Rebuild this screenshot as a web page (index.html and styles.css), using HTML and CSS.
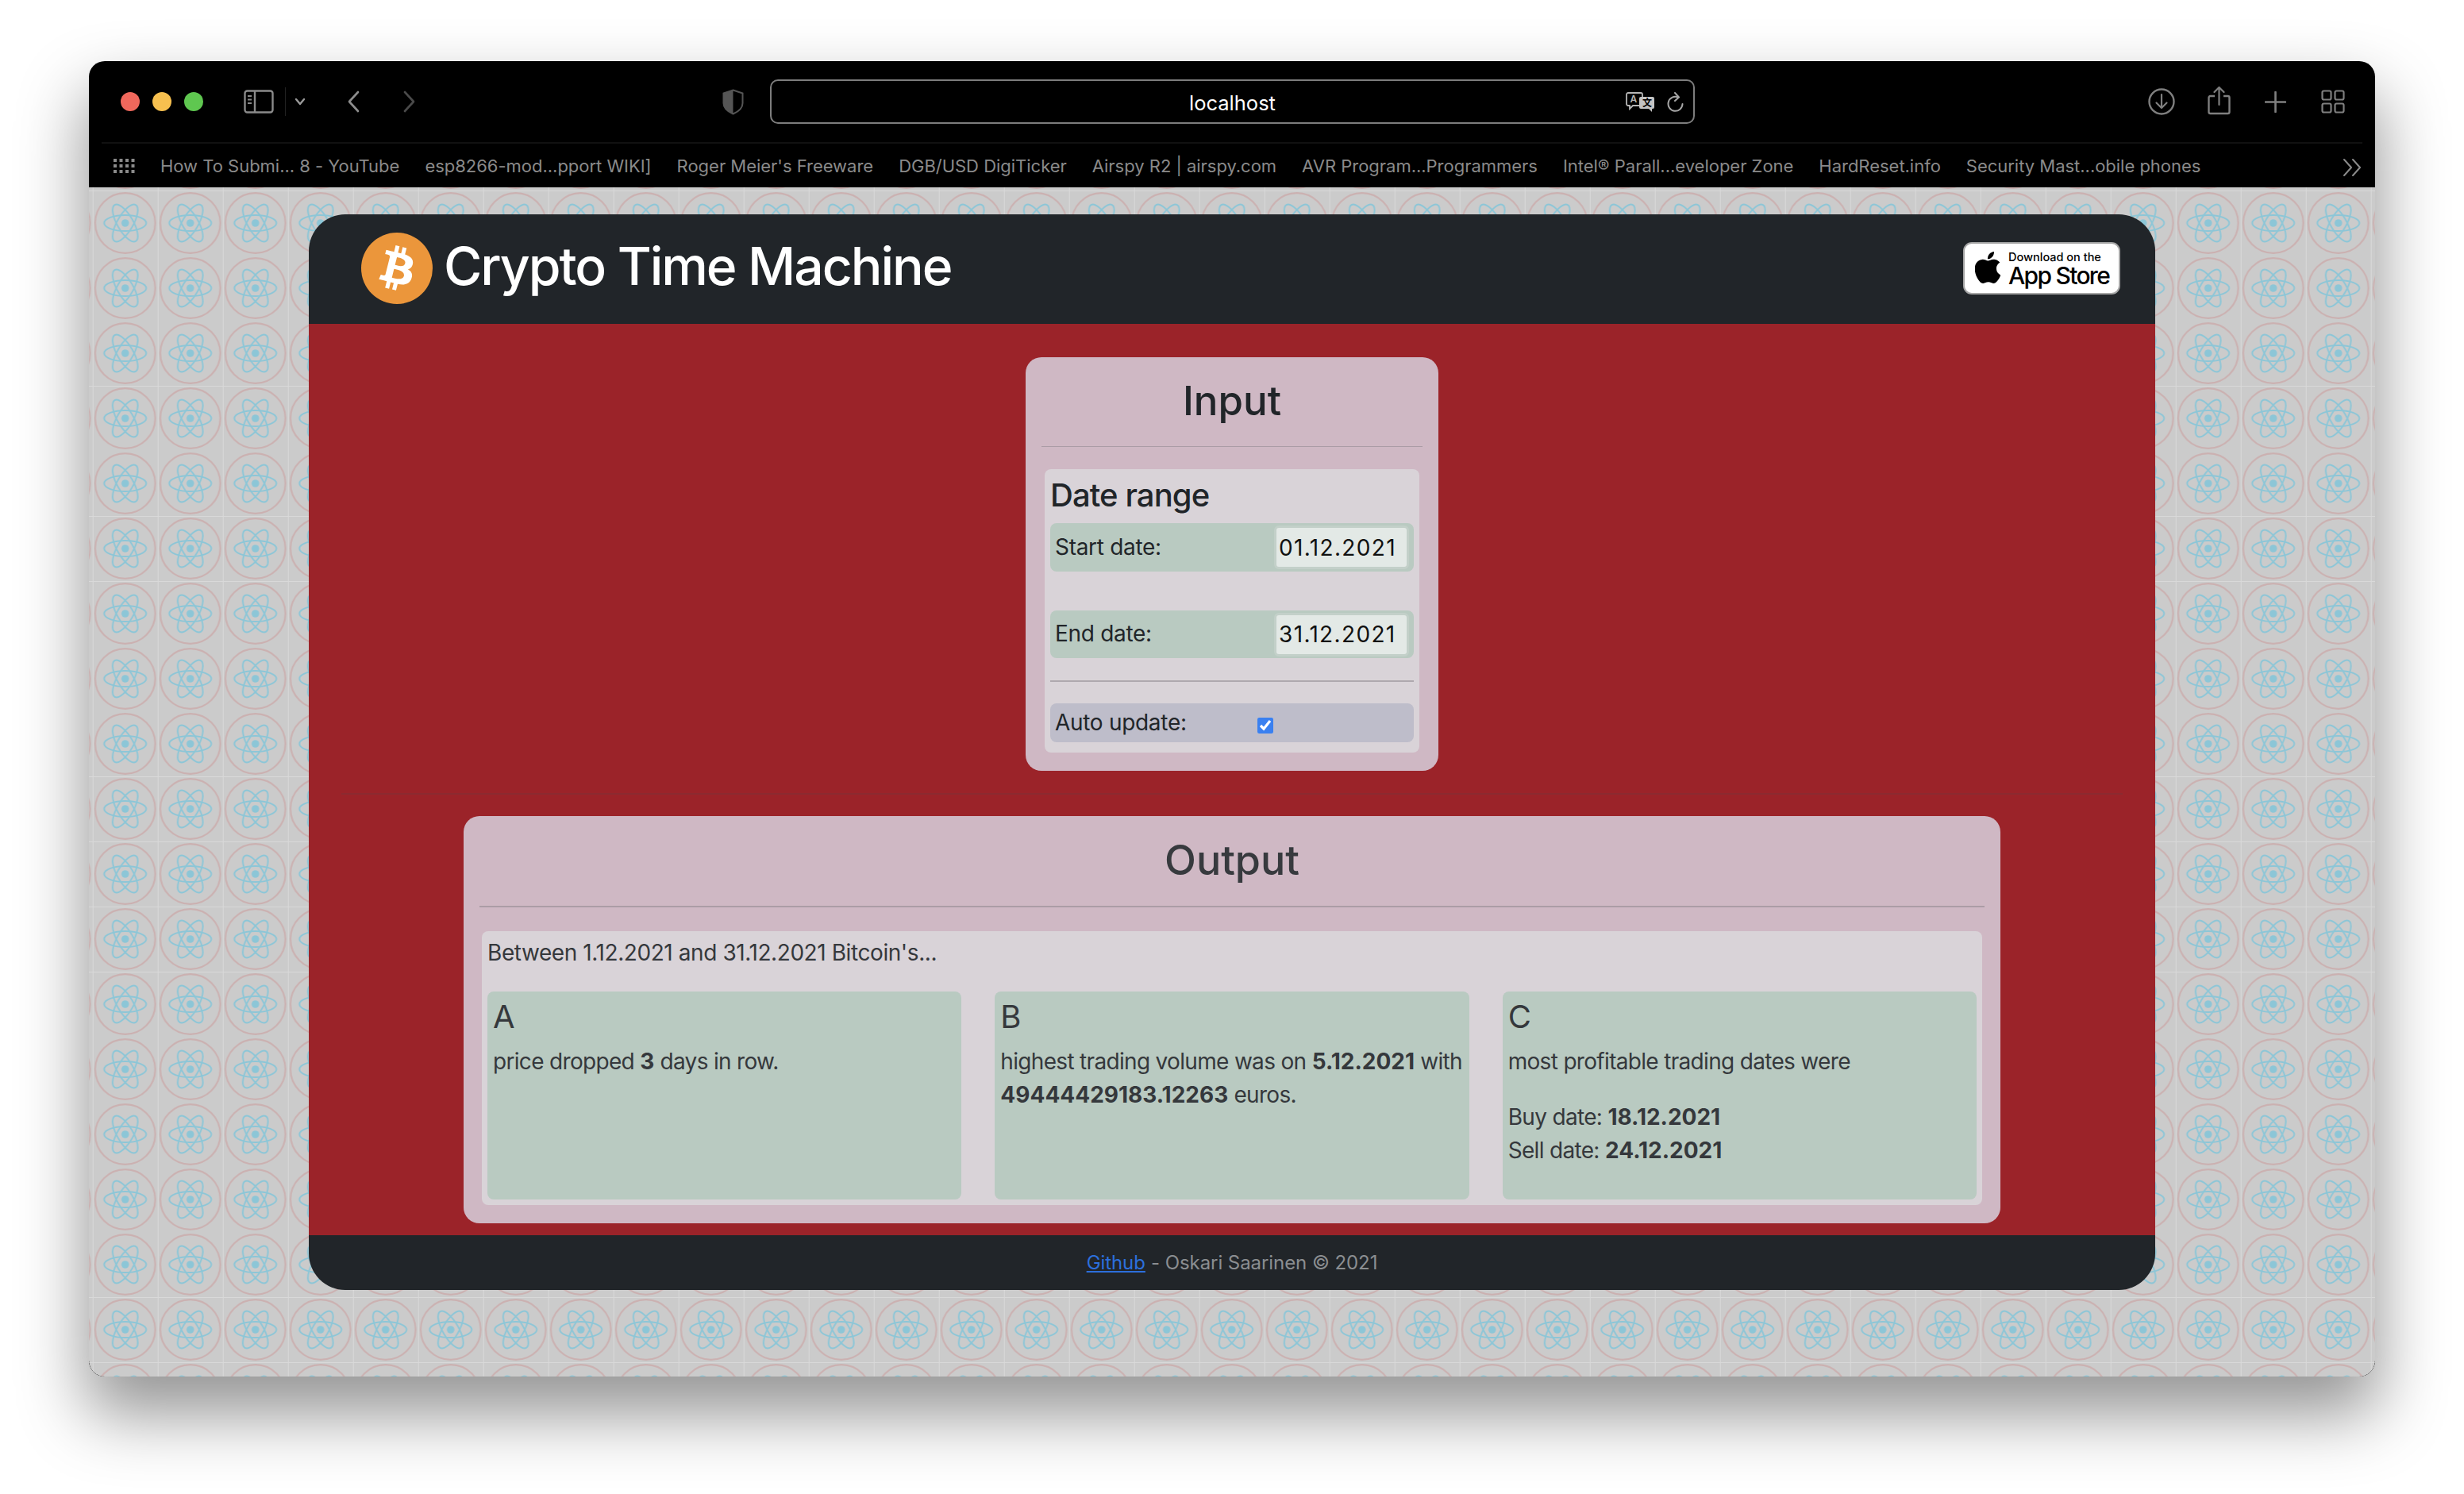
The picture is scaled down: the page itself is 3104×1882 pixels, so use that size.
FILE: index.html
```html
<!DOCTYPE html>
<html lang="en">
<head>
<meta charset="utf-8">
<title>Crypto Time Machine</title>
<link rel="stylesheet" href="styles.css">
</head>
<body>
<div class="window">
  <div class="toolbar">
    <span class="light red"></span><span class="light yellow"></span><span class="light green"></span>
    <svg class="ic sidebar" viewBox="0 0 38 30"><rect x="1.500" y="1.500" width="35" height="27" rx="3" fill="none" stroke="#8a8a8a" stroke-width="2.400"/><path d="M14 2v26" stroke="#8a8a8a" stroke-width="2.400"/><path d="M5 8h5M5 12.500h5M5 17h5" stroke="#8a8a8a" stroke-width="2"/></svg>
    <span class="divider"></span>
    <svg class="ic chev" viewBox="0 0 14 10"><path d="M2 2l5 6 5-6" fill="none" stroke="#9a9a9a" stroke-width="2.400" stroke-linecap="round" stroke-linejoin="round"/></svg>
    <svg class="ic back" viewBox="0 0 16 28"><path d="M14 2L3 14l11 12" fill="none" stroke="#8d8d8d" stroke-width="2.600" stroke-linecap="round" stroke-linejoin="round"/></svg>
    <svg class="ic fwd" viewBox="0 0 16 28"><path d="M2 2l11 12L2 26" fill="none" stroke="#4a4a4a" stroke-width="2.600" stroke-linecap="round" stroke-linejoin="round"/></svg>
    <svg class="ic shield" viewBox="0 0 27 33"><path d="M13.500 1.500L25.500 5.500V18c0 6-5 10.500-12 13.500C6.500 28.500 1.500 24 1.500 18V5.500z" fill="none" stroke="#555" stroke-width="2"/><path d="M13.500 1.500L1.500 5.500V18c0 6 5 10.500 12 13.500z" fill="#555"/></svg>
    <div class="address">
      <span class="host">localhost</span>
      <div class="addr-icons">
        <svg class="ic translate" viewBox="0 0 37 26"><path d="M3 1h16a2 2 0 0 1 2 2v12a2 2 0 0 1-2 2H9l-4 4v-4H3a2 2 0 0 1-2-2V3a2 2 0 0 1 2-2z" fill="none" stroke="#b5b5b5" stroke-width="1.800"/><text x="5.500" y="13" class="tr-a">A</text><path d="M19 6h15a2 2 0 0 1 2 2v11a2 2 0 0 1-2 2h-1v4l-4-4H19a2 2 0 0 1-2-2V8a2 2 0 0 1 2-2z" fill="#c4c4c4"/><text x="21" y="18" class="tr-b">文</text></svg>
        <svg class="ic reload" viewBox="0 0 22 26"><path d="M14 6.500A9 9 0 1 0 19.500 15" fill="none" stroke="#a6a6a6" stroke-width="2" stroke-linecap="round"/><path d="M10 1l5 5.500-5 4.500" fill="none" stroke="#a6a6a6" stroke-width="2" stroke-linecap="round" stroke-linejoin="round"/></svg>
      </div>
    </div>
    <svg class="ic download" viewBox="0 0 34 34"><circle cx="17" cy="17" r="15.500" fill="none" stroke="#7f7f7f" stroke-width="2.400"/><path d="M17 8v17M10.500 18.500L17 25l6.500-6.500" fill="none" stroke="#7f7f7f" stroke-width="2.200" stroke-linecap="round" stroke-linejoin="round"/></svg>
    <svg class="ic share" viewBox="0 0 29 37"><path d="M9 13H3.500a2 2 0 0 0-2 2v18a2 2 0 0 0 2 2h22a2 2 0 0 0 2-2V15a2 2 0 0 0-2-2H20" fill="none" stroke="#7f7f7f" stroke-width="2.400"/><path d="M14.500 24V2M8.500 8l6-6 6 6" fill="none" stroke="#7f7f7f" stroke-width="2.200" stroke-linecap="round" stroke-linejoin="round"/></svg>
    <svg class="ic plus" viewBox="0 0 27 27"><path d="M13.500 1v25M1 13.500h25" stroke="#7f7f7f" stroke-width="2.600" stroke-linecap="round"/></svg>
    <svg class="ic tabs" viewBox="0 0 30 30"><g fill="none" stroke="#7f7f7f" stroke-width="2.200"><rect x="1.500" y="1.500" width="11" height="11" rx="2"/><rect x="17.500" y="1.500" width="11" height="11" rx="2"/><rect x="1.500" y="17.500" width="11" height="11" rx="2"/><rect x="17.500" y="17.500" width="11" height="11" rx="2"/></g></svg>
  </div>
  <div class="bookmarks">
    <svg class="ic apps" viewBox="0 0 27 18"><g fill="#8a8a8a"><rect x="0" y="0" width="4" height="4"/><rect x="7.500" y="0" width="4" height="4"/><rect x="15" y="0" width="4" height="4"/><rect x="22.500" y="0" width="4" height="4"/><rect x="0" y="7" width="4" height="4"/><rect x="7.500" y="7" width="4" height="4"/><rect x="15" y="7" width="4" height="4"/><rect x="22.500" y="7" width="4" height="4"/><rect x="0" y="14" width="4" height="4"/><rect x="7.500" y="14" width="4" height="4"/><rect x="15" y="14" width="4" height="4"/><rect x="22.500" y="14" width="4" height="4"/></g></svg>
    <span class="bm">How To Submi... 8 - YouTube</span>
    <span class="bm">esp8266-mod...pport WIKI]</span>
    <span class="bm">Roger Meier's Freeware</span>
    <span class="bm">DGB/USD DigiTicker</span>
    <span class="bm">Airspy R2 | airspy.com</span>
    <span class="bm">AVR Program...Programmers</span>
    <span class="bm">Intel® Parall...eveloper Zone</span>
    <span class="bm">HardReset.info</span>
    <span class="bm">Security Mast...obile phones</span>
    <svg class="ic more" viewBox="0 0 24 22"><path d="M2 1l9 10-9 10M13 1l9 10-9 10" fill="none" stroke="#8a8a8a" stroke-width="2" stroke-linecap="round" stroke-linejoin="round"/></svg>
  </div>
  <div class="page">
    <svg class="wallpaper" width="100%" height="100%">
      <defs>
        <pattern id="atom" x="4.700" y="4" width="82" height="82" patternUnits="userSpaceOnUse">
          <path d="M0 .5H82M.5 0V82" stroke="#d9d9d9" stroke-width="1" fill="none"/>
          <circle cx="41" cy="41" r="37.800" fill="none" stroke="#cbb1b1" stroke-width="2.200"/>
          <g fill="none" stroke="#8cc6d7" stroke-width="2">
            <ellipse cx="41" cy="41" rx="26.500" ry="10"/>
            <ellipse cx="41" cy="41" rx="26.500" ry="10" transform="rotate(60 41 41)"/>
            <ellipse cx="41" cy="41" rx="26.500" ry="10" transform="rotate(120 41 41)"/>
          </g>
          <circle cx="41" cy="41" r="4.800" fill="#8cc6d7"/>
        </pattern>
      </defs>
      <rect width="100%" height="100%" fill="#cbcbcb"/>
      <rect width="100%" height="100%" fill="url(#atom)"/>
    </svg>
    <div class="app">
      <header class="app-head">
        <div class="brand">
          <svg class="btc" viewBox="0 0 90 90"><circle cx="45" cy="45" r="45" fill="#eb963b"/><g transform="translate(0.500 0.500) scale(1.400)"><path fill="#fff" d="M46.110 27.441c.636-4.258-2.606-6.547-7.039-8.074l1.438-5.768-3.512-.875-1.400 5.616c-.922-.230-1.870-.447-2.812-.662l1.410-5.653-3.509-.875-1.439 5.766c-.764-.174-1.514-.346-2.242-.527l.004-.018-4.842-1.209-.934 3.750s2.605.597 2.550.634c1.422.355 1.680 1.296 1.636 2.042l-1.638 6.571c.098.025.225.061.365.117l-.370-.092-2.297 9.205c-.174.432-.615 1.080-1.609.834.035.051-2.552-.637-2.552-.637l-1.743 4.020 4.570 1.139c.850.213 1.683.436 2.502.646l-1.453 5.835 3.507.875 1.440-5.772c.957.260 1.887.500 2.797.726L27.504 50.800l3.511.875 1.453-5.823c5.987 1.133 10.490.676 12.383-4.738 1.527-4.360-.075-6.875-3.225-8.516 2.294-.531 4.022-2.040 4.483-5.157zM38.087 38.690c-1.086 4.360-8.426 2.004-10.807 1.412l1.928-7.729c2.380.594 10.011 1.770 8.880 6.317zm1.085-11.312c-.990 3.966-7.100 1.951-9.083 1.457l1.748-7.010c1.983.494 8.367 1.416 7.335 5.553z"/></g></svg>
          <h1 class="title">Crypto Time Machine</h1>
        </div>
        <a class="badge">
          <svg class="apple" viewBox="2.500 0 19 24"><path fill="#000" d="M12.152 6.896c-.948 0-2.415-1.078-3.960-1.040-2.040.027-3.910 1.183-4.961 3.014-2.117 3.675-.546 9.103 1.519 12.090 1.013 1.454 2.208 3.090 3.792 3.039 1.520-.065 2.090-.987 3.935-.987 1.831 0 2.350.987 3.960.948 1.637-.026 2.676-1.480 3.676-2.948 1.156-1.688 1.636-3.325 1.662-3.415-.039-.013-3.182-1.221-3.220-4.857-.026-3.040 2.480-4.494 2.597-4.559-1.429-2.090-3.623-2.324-4.390-2.376-2-.156-3.675 1.090-4.610 1.090zM15.530 3.830c.843-1.012 1.400-2.427 1.245-3.830-1.207.052-2.662.805-3.532 1.818-.780.896-1.454 2.338-1.273 3.714 1.338.104 2.715-.688 3.559-1.701"/></svg>
          <span class="badge-text"><span class="badge-small">Download on the</span><span class="badge-big">App Store</span></span>
        </a>
      </header>
      <main class="app-body">
        <section class="card input-card">
          <h2 class="card-title">Input</h2>
          <hr class="rule">
          <div class="panel input-panel">
            <h3 class="group-title">Date range</h3>
            <div class="row date-row"><label class="row-label">Start date:</label><input class="date" type="text" value="01.12.2021"></div>
            <div class="row date-row second"><label class="row-label">End date:</label><input class="date" type="text" value="31.12.2021"></div>
            <hr class="rule inner">
            <div class="row auto-row"><label class="row-label wide">Auto update:</label><input class="check" type="checkbox" checked></div>
          </div>
        </section>
        <hr class="split">
        <section class="card output-card">
          <h2 class="card-title big">Output</h2>
          <hr class="rule thick">
          <div class="panel output-panel">
            <p class="lead">Between 1.12.2021 and 31.12.2021 Bitcoin's...</p>
            <div class="answers">
              <article class="answer"><h4 class="letter">A</h4><p>price dropped <b>3</b> days in row.</p></article>
              <article class="answer"><h4 class="letter">B</h4><p>highest trading volume was on <b>5.12.2021</b> with <b>49444429183.12263</b> euros.</p></article>
              <article class="answer"><h4 class="letter">C</h4><p class="spaced">most profitable trading dates were</p><p>Buy date: <b>18.12.2021</b></p><p>Sell date: <b>24.12.2021</b></p></article>
            </div>
          </div>
        </section>
      </main>
      <footer class="app-foot"><a class="gh" href="#">Github</a> - Oskari Saarinen © 2021</footer>
    </div>
  </div>
</div>
</body>
</html>
```

FILE: styles.css
```css
* { box-sizing: border-box; }
html, body { margin: 0; padding: 0; }
body {
  background: #fff;
  font-family: Inter, "Noto Sans", "Liberation Sans", sans-serif;
  height: 1882px;
  overflow: hidden;
}
.window {
  margin: 77px 112px 148px;
  height: 1657px;
  border-radius: 20px;
  background: #000;
  box-shadow: 0 44px 84px 4px rgba(0, 0, 0, .42);
  display: flex;
  flex-direction: column;
  overflow: hidden;
}
.ic { display: block; flex: none; }
.toolbar {
  height: 104px;
  flex: none;
  display: flex;
  align-items: center;
  padding: 0 0 2px 40px;
  position: relative;
}
.toolbar::after {
  content: "";
  position: absolute;
  left: 16px;
  right: 16px;
  bottom: 0;
  height: 2px;
  background: #111;
}
.light { width: 24px; height: 24px; border-radius: 50%; margin-right: 16px; flex: none; }
.light.red { background: #f0685c; }
.light.yellow { background: #f7c04f; }
.light.green { background: #5fc750; margin-right: 0; }
.sidebar { width: 38px; height: 30px; margin-left: 51px; }
.divider { width: 1px; height: 36px; background: #222; margin-left: 14px; flex: none; }
.chev { width: 14px; height: 10px; margin-left: 11px; }
.back { width: 16px; height: 28px; margin-left: 52px; }
.fwd { width: 16px; height: 28px; margin-left: 55px; }
.shield { width: 27px; height: 33px; margin-left: 386px; }
.address {
  width: 1165px;
  height: 56px;
  margin-left: 33px;
  border: 2px solid #7d7d7d;
  border-radius: 10px;
  flex: none;
  display: flex;
  align-items: center;
  justify-content: center;
  position: relative;
}
.host { color: #fff; font-size: 25.500px; font-weight: 400; padding-top: 2px; }
.addr-icons {
  position: absolute;
  right: 11px;
  top: 14px;
  display: flex;
  gap: 15px;
}
.translate { width: 37px; height: 26px; }
.tr-a { font: 600 12px Inter, sans-serif; fill: #b5b5b5; }
.tr-b { font: 600 12px "Noto Sans CJK SC", sans-serif; fill: #000; }
.reload { width: 22px; height: 26px; }
.download { width: 34px; height: 34px; margin-left: 571px; }
.share { width: 29px; height: 37px; margin-left: 41px; margin-top: -3px; }
.plus { width: 27px; height: 27px; margin-left: 43px; }
.tabs { width: 30px; height: 30px; margin-left: 44px; }

.bookmarks {
  height: 55px;
  flex: none;
  display: flex;
  align-items: center;
  padding: 0 17px 0 31px;
  gap: 32px;
  color: #8a8a8a;
  font-size: 22px;
  letter-spacing: -.02px;
}
.apps { width: 27px; height: 18px; }
.bm { white-space: nowrap; }
.more { width: 24px; height: 22px; margin-left: auto; margin-top: 4px; }

.page {
  flex: 1;
  position: relative;
  overflow: hidden;
  border-radius: 0 0 20px 20px;
}
.wallpaper { position: absolute; left: 0; top: 0; display: block; }
.app {
  position: relative;
  width: 2326px;
  margin: 34px auto 0;
  border-radius: 46px;
  overflow: hidden;
  display: flex;
  flex-direction: column;
}
.app-head {
  height: 138px;
  background: #212529;
  display: flex;
  align-items: center;
  justify-content: space-between;
  padding: 0 44px 2px 66px;
}
.brand { display: flex; align-items: center; gap: 14px; }
.btc { width: 90px; height: 90px; display: block; }
.title { margin: -4px 0 0; color: #fff; font-size: 66px; font-weight: 500; letter-spacing: -2.050px; line-height: 1.2; }
.badge {
  width: 198px;
  height: 66px;
  background: #fff;
  border: 2px solid #a6a6a6;
  border-radius: 11px;
  display: flex;
  align-items: center;
  padding-left: 13px;
  gap: 10px;
}
.apple { width: 32px; height: 40px; display: block; margin-top: -2px; }
.badge-text { display: flex; flex-direction: column; color: #000; white-space: nowrap; padding-top: 2px; }
.badge-small { font-size: 14.500px; font-weight: 500; line-height: 16px; }
.badge-big { font-size: 30px; font-weight: 500; line-height: 30px; letter-spacing: -1.700px; }

.app-body {
  height: 1148px;
  background: #9b2329;
  padding-top: 42px;
  display: flex;
  flex-direction: column;
  align-items: center;
}
.card { background: #cfb8c4; border-radius: 20px; padding: 0 20px; flex: none; }
.input-card { width: 520px; height: 521px; }
.output-card { width: 1936px; height: 513px; }
.card-title {
  margin: 0;
  height: 112px;
  line-height: 110px;
  text-align: center;
  font-size: 51px;
  font-weight: 500;
  color: #212529;
}
.card-title.big { height: 113px; line-height: 111px; font-size: 52px; color: #373a3e; }
.rule { margin: 0; border: 0; height: 1px; background: #ab9ca6; }
.rule.thick { height: 2px; }
.rule.inner { height: 2px; margin: 28px 0 27px; background: #aea8ae; }
.split { width: calc(100% - 82px); margin: 28px 0 27px; height: 2px; border: 0; background: #8c2a30; flex: none; }
.panel { background: #d9d3d8; border-radius: 8px; }
.input-panel { margin: 28px 4px 0; padding: 0 7px; height: 357px; }
.group-title {
  margin: 0;
  height: 68px;
  line-height: 66px;
  font-size: 40px;
  font-weight: 500;
  letter-spacing: -.9px;
  color: #212529;
}
.row {
  display: flex;
  align-items: center;
  border-radius: 8px;
  padding-left: 6px;
  color: #212529;
  font-size: 28px;
  letter-spacing: -.3px;
}
.date-row { height: 61px; background: #b9cac1; justify-content: space-between; padding-right: 6px; }
.date-row.second { height: 60px; margin-top: 49px; }
.row-label { white-space: nowrap; padding-bottom: 2px; }
.row-label.wide { width: 255px; flex: none; }
.date {
  width: 170px;
  height: 55px;
  border: 3px solid #c3d0c9;
  border-radius: 6px;
  background: #e3e9e6;
  color: #111;
  font: 400 28px Inter, sans-serif;
  letter-spacing: 1.350px;
  padding: 0 0 0 3px;
  outline: none;
}
.auto-row { height: 49px; background: #bebdca; }
.check { width: 20px; height: 20px; margin: 6px 0 0; accent-color: #3a80f0; }
.output-panel { margin: 30px 3px 0; padding: 0 7px; height: 345px; color: #35383c; }
.lead { margin: 0; height: 76px; line-height: 54px; font-size: 28px; letter-spacing: -.42px; }
.answers { display: grid; grid-template-columns: repeat(3, 1fr); gap: 42px; }
.answer {
  height: 262px;
  background: #b9cac1;
  border-radius: 8px;
  padding: 8px 7px 0 7px;
  font-size: 28px;
  line-height: 42px;
  letter-spacing: -.68px;
}
.answer b { letter-spacing: 0; }
.answer p { margin: 0; }
.answer p.spaced { margin-bottom: 28px; }
.letter { margin: 0 0 11px; font-size: 40px; line-height: 48px; font-weight: 400; }
.app-foot {
  height: 69px;
  background: #212529;
  color: #8b8e91;
  font-size: 24px;
  letter-spacing: -.07px;
  display: flex;
  align-items: center;
  justify-content: center;
  gap: .3em;
}
.gh { color: #2c6fdc; text-decoration: underline; }
```
